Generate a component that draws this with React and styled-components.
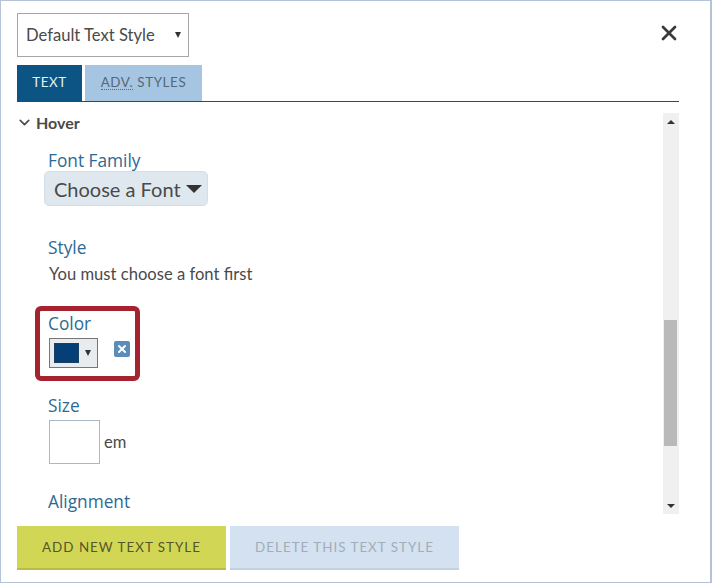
import React from 'react';
import styled, { createGlobalStyle } from 'styled-components';
import { ChevronDown, X } from 'lucide-react';

const GlobalStyle = createGlobalStyle`
  html, body {
    margin: 0;
    padding: 0;
    background: #ffffff;
  }
  * {
    box-sizing: border-box;
  }
`;

const Frame = styled.div`
  width: 712px;
  height: 583px;
  padding: 12px 31px 0 16px;
  border: 1px solid #b4c4d6;
  border-right-width: 2px;
  background: #ffffff;
  font-family: 'Lato', 'Open Sans', sans-serif;
  color: #4a4a4a;
  overflow: hidden;
`;

const TopRow = styled.div`
  display: flex;
  justify-content: space-between;
  align-items: center;
  height: 44px;
`;

const StyleSelect = styled.div`
  display: flex;
  align-items: center;
  justify-content: space-between;
  width: 172px;
  height: 44px;
  padding: 0 7px 0 8px;
  border: 1px solid #a6a6a6;
  font-size: 16.6px;
  color: #4a4a4a;
`;

const Caret = styled.span`
  width: 0;
  height: 0;
  border-left: ${(p) => p.$size}px solid transparent;
  border-right: ${(p) => p.$size}px solid transparent;
  border-top: ${(p) => p.$height}px solid ${(p) => p.$color || '#333333'};
`;

const CloseButton = styled.button`
  display: flex;
  padding: 0;
  margin: -5px -2px 0 0;
  border: none;
  background: none;
  color: #3a3a3a;
`;

const TabBar = styled.div`
  display: flex;
  gap: 3px;
  height: 37px;
  margin-top: 8px;
  border-bottom: 1px solid #0b5484;
`;

const Tab = styled.div`
  display: flex;
  align-items: center;
  justify-content: center;
  width: ${(p) => p.$width}px;
  height: 36px;
  padding-bottom: 2px;
  font-size: 13.4px;
  letter-spacing: 0.6px;
  background: ${(p) => (p.$active ? '#0b5484' : '#a6c5e2')};
  color: ${(p) => (p.$active ? '#e6f0f7' : '#566878')};
`;

const Abbr = styled.span`
  border-bottom: 1px dotted #566878;
  line-height: 14px;
  margin-right: 4px;
`;

const Body = styled.div`
  display: flex;
  height: 401px;
  margin-top: 11px;
`;

const Content = styled.div`
  flex: 1;
  height: 100%;
  overflow: hidden;
`;

const SectionHead = styled.div`
  display: flex;
  align-items: center;
  gap: 3px;
  height: 18px;
  margin-left: -1px;
  font-size: 16px;
  font-weight: 700;
  color: #4a4a4a;
`;

const Fields = styled.div`
  display: flex;
  flex-direction: column;
  padding: 20px 0 0 32px;
`;

const Field = styled.div`
  margin-bottom: ${(p) => p.$gap}px;
`;

const Label = styled.div`
  margin-left: -1px;
  font-family: 'Open Sans', 'Lato', sans-serif;
  font-size: 17.3px;
  line-height: 20px;
  color: #2c6a94;
`;

const FontDropdown = styled.div`
  display: flex;
  align-items: center;
  gap: 5px;
  width: 164px;
  height: 35px;
  margin-left: -5px;
  padding: 1px 0 0 9px;
  background: #dfe8ef;
  border: 1px solid #d3dee6;
  border-radius: 5px;
  font-size: 20px;
  color: #4a4a4a;
`;

const HelpText = styled.div`
  margin-top: 6px;
  font-size: 16.6px;
  line-height: 20px;
  color: #4a4a4a;
`;

const HighlightBox = styled.div`
  width: 105px;
  height: 75px;
  margin-left: -14px;
  padding: 3px 0 0 9px;
  border: 5px solid #a5232f;
  border-radius: 6px;
`;

const ColorRow = styled.div`
  display: flex;
  align-items: flex-start;
  gap: 16px;
  margin-top: 4px;
`;

const ColorPicker = styled.div`
  display: flex;
  align-items: center;
  gap: 6px;
  width: 49px;
  height: 30px;
  padding-left: 4px;
  background: #e8ecef;
  border: 1px solid #777777;
`;

const Swatch = styled.div`
  width: 25px;
  height: 20px;
  background: #063f76;
  border: 1px solid #1c3f60;
`;

const ClearButton = styled.div`
  display: flex;
  align-items: center;
  justify-content: center;
  width: 16px;
  height: 16px;
  margin-top: 3px;
  border-radius: 2px;
  background: #5b8db8;
  color: #ffffff;
`;

const SizeRow = styled.div`
  display: flex;
  align-items: center;
  gap: 4px;
  margin-top: 4px;
  font-size: 16.6px;
  color: #4a4a4a;
`;

const SizeInput = styled.div`
  width: 51px;
  height: 44px;
  border: 1px solid #a9b8c6;
`;

const ScrollBar = styled.div`
  display: flex;
  flex-direction: column;
  align-items: center;
  width: 16px;
  height: 100%;
  background: #f0f0f0;
`;

const ScrollArrow = styled.div`
  display: flex;
  align-items: center;
  justify-content: center;
  flex: none;
  height: 17px;
`;

const CaretUp = styled(Caret)`
  transform: rotate(180deg);
`;

const ScrollTrack = styled.div`
  flex: 1;
  width: 100%;
  padding: 190px 2px 0 1px;
`;

const ScrollThumb = styled.div`
  height: 126px;
  background: #b9b9b9;
`;

const Footer = styled.div`
  display: flex;
  gap: 4px;
  margin-top: 12px;
`;

const FooterButton = styled.button`
  height: 44px;
  width: ${(p) => p.$width}px;
  padding: 0;
  border: none;
  border-bottom: 2px solid ${(p) => (p.$primary ? '#b8bd45' : '#c3d2e0')};
  background: ${(p) => (p.$primary ? '#d2d655' : '#d3e1f0')};
  color: ${(p) => (p.$primary ? '#55572a' : '#a3adb7')};
  font-family: 'Lato', 'Open Sans', sans-serif;
  font-size: 13.4px;
  letter-spacing: 1px;
`;

export default function App() {
  return (
    <>
      <GlobalStyle />
      <Frame>
        <TopRow>
          <StyleSelect>
            Default Text Style
            <Caret $size={3} $height={6} />
          </StyleSelect>
          <CloseButton aria-label="Close">
            <X size={24} strokeWidth={2.75} />
          </CloseButton>
        </TopRow>
        <TabBar>
          <Tab $active $width={65}>TEXT</Tab>
          <Tab $width={117}>
            <Abbr>ADV.</Abbr>STYLES
          </Tab>
        </TabBar>
        <Body>
          <Content>
            <SectionHead>
              <ChevronDown size={17} strokeWidth={2.25} />
              Hover
            </SectionHead>
            <Fields>
              <Field $gap={32}>
                <Label>Font Family</Label>
                <FontDropdown>
                  Choose a Font
                  <Caret $size={8} $height={8} />
                </FontDropdown>
              </Field>
              <Field $gap={22}>
                <Label>Style</Label>
                <HelpText>You must choose a font first</HelpText>
              </Field>
              <Field $gap={15}>
                <HighlightBox>
                  <Label>Color</Label>
                  <ColorRow>
                    <ColorPicker>
                      <Swatch />
                      <Caret $size={3} $height={6} />
                    </ColorPicker>
                    <ClearButton>
                      <X size={12} strokeWidth={4} />
                    </ClearButton>
                  </ColorRow>
                </HighlightBox>
              </Field>
              <Field $gap={28}>
                <Label>Size</Label>
                <SizeRow>
                  <SizeInput />
                  em
                </SizeRow>
              </Field>
              <Field $gap={0}>
                <Label>Alignment</Label>
              </Field>
            </Fields>
          </Content>
          <ScrollBar>
            <ScrollArrow>
              <CaretUp $size={4} $height={4} />
            </ScrollArrow>
            <ScrollTrack>
              <ScrollThumb />
            </ScrollTrack>
            <ScrollArrow>
              <Caret $size={4} $height={4} />
            </ScrollArrow>
          </ScrollBar>
        </Body>
        <Footer>
          <FooterButton $primary $width={209}>ADD NEW TEXT STYLE</FooterButton>
          <FooterButton $width={229}>DELETE THIS TEXT STYLE</FooterButton>
        </Footer>
      </Frame>
    </>
  );
}
